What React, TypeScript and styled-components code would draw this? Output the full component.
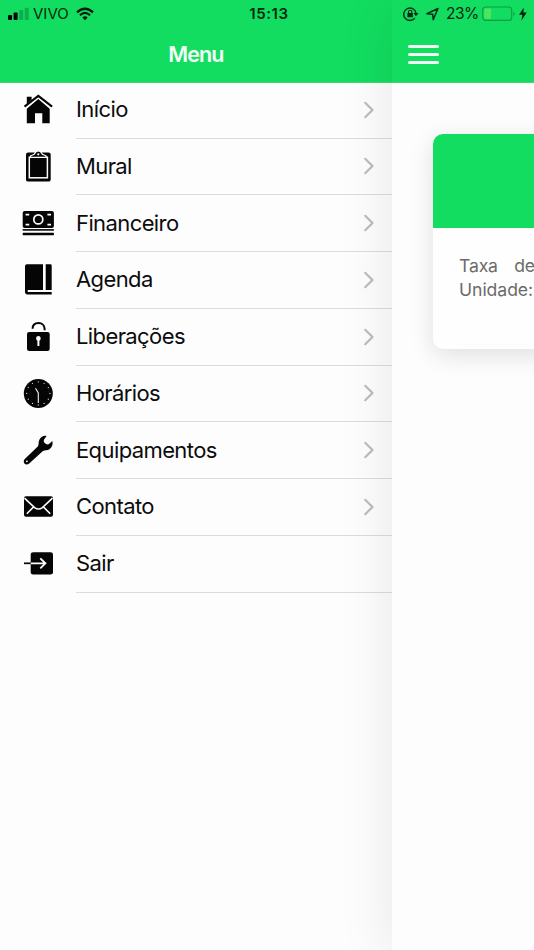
import React from "react";
import styled, { createGlobalStyle } from "styled-components";

const GREEN = "#12dd60";

const GlobalStyle = createGlobalStyle`
  * { box-sizing: border-box; }
  html, body { margin: 0; padding: 0; background: #fdfdfd; }
  body { font-family: Inter, "Liberation Sans", sans-serif; overflow: hidden; }
`;

const Screen = styled.div`
  position: relative;
  display: grid;
  grid-template-columns: 392px 142px;
  width: 534px;
  height: 950px;
  overflow: hidden;
  background: #fdfdfd;
`;

const StatusBar = styled.div`
  position: absolute;
  z-index: 3;
  inset: 0 0 auto 0;
  height: 27px;
  display: grid;
  grid-template-columns: 248px 42px 1fr;
  align-items: center;
  color: #06290f;
`;

const StatusGroup = styled.div<{ $left: number }>`
  display: flex;
  align-items: center;
  padding-left: ${(p) => p.$left}px;
  svg { display: block; flex: none; }
`;

const StatusText = styled.span<{ $width: number; $size: number; $spacing?: number }>`
  width: ${(p) => p.$width}px;
  font-size: ${(p) => p.$size}px;
  line-height: 20px;
  letter-spacing: ${(p) => p.$spacing ?? 0}px;
  white-space: nowrap;
`;

const Clock = styled.span`
  font-size: 15px;
  font-weight: 600;
  line-height: 20px;
  text-align: center;
  letter-spacing: 0.6px;
  white-space: nowrap;
`;

const MenuPane = styled.nav`
  min-width: 0;
  display: flex;
  flex-direction: column;
`;

const Header = styled.header<{ $align?: string }>`
  flex: none;
  height: 83px;
  padding-top: 27px;
  display: flex;
  align-items: center;
  justify-content: ${(p) => p.$align ?? "center"};
  background: ${GREEN};
  border-bottom: 1px solid #3fd678;
`;

const Title = styled.h1`
  margin: -1px 0 0;
  font-size: 21.5px;
  font-weight: 600;
  line-height: 28px;
  letter-spacing: -0.9px;
  color: #f4fff8;
`;

const List = styled.ul`
  list-style: none;
  margin: -1.2px 0 0;
  padding: 0;
`;

const Row = styled.li`
  display: grid;
  grid-template-columns: 54px 1fr;
  column-gap: 22px;
  height: 56.75px;
`;

const IconSlot = styled.span`
  display: flex;
  align-items: center;
  justify-content: flex-end;
  svg { display: block; }
`;

const RowBody = styled.span`
  display: flex;
  align-items: center;
  justify-content: space-between;
  padding-right: 17px;
  border-bottom: 1px solid #dcdcdc;
`;

const Label = styled.span`
  margin-top: -1px;
  font-size: 22px;
  line-height: 30px;
  letter-spacing: -0.6px;
  color: #0c0c0c;
`;

const ContentPane = styled.main`
  position: relative;
  z-index: 1;
  display: flex;
  flex-direction: column;
  background: #fdfdfd;
  box-shadow: 0 8px 56px rgba(0, 0, 0, 0.095);
`;

const MenuButton = styled.button`
  margin: 0 0 0 16px;
  padding: 0;
  border: 0;
  background: none;
  width: 31px;
  height: 19px;
  display: flex;
  flex-direction: column;
  justify-content: space-between;
`;

const Bar = styled.span`
  height: 3px;
  width: 31px;
  border-radius: 2px;
  background: #effff4;
`;

const Viewport = styled.div`
  flex: 1;
  overflow: hidden;
  padding: 51px 0 0 41px;
`;

const Card = styled.section`
  width: 330px;
  height: 215px;
  border-radius: 10px;
  overflow: hidden;
  background: #fefefe;
  box-shadow: 0 6px 24px rgba(0, 0, 0, 0.12);
`;

const CardBanner = styled.div`
  height: 94px;
  background: ${GREEN};
`;

const CardText = styled.p`
  margin: 0;
  padding: 25.5px 0 0 26px;
  font-size: 17.6px;
  line-height: 24.5px;
  color: #6b6b6b;
  white-space: nowrap;
`;

const TextLine = styled.span<{ $gap?: number; $spacing: number }>`
  display: block;
  word-spacing: ${(p) => p.$gap ?? 0}px;
  letter-spacing: ${(p) => p.$spacing}px;
`;

const Icon = ({ children }: { children: React.ReactNode }) => (
  <svg width="32" height="32" viewBox="0 0 32 32" fill="#050505">
    {children}
  </svg>
);

const HomeIcon = () => (
  <Icon>
    <path d="M16.3 4.9 27.7 14.8V29.3H20.3V19.2H13V29.3H4.8V14.8Z" />
    <path d="M2.4 13.3 16.3 2 30.2 13.3" fill="none" stroke="#fdfdfd" strokeWidth="3.8" />
    <path d="M4.8 2.8H9.6V6L4.8 10Z" />
    <path d="M2.5 12.6 16.3 1.9 30.1 12.6" fill="none" stroke="#050505" strokeWidth="2.1" />
  </Icon>
);

const ClipboardIcon = () => (
  <Icon>
    <rect x="4" y="1.4" width="24.7" height="29.2" rx="2.2" />
    <rect x="7.3" y="6.2" width="18.1" height="20.6" fill="none" stroke="#fdfdfd" strokeWidth="1.5" />
    <path
      d="M8.6 6.4V4.8L12.2 3.2C13 1.6 14.3-.2 16.3-.2S19.6 1.6 20.4 3.2L24 4.8V6.4Z"
      stroke="#fdfdfd"
      strokeWidth="1.2"
    />
    <circle cx="16.3" cy="3.3" r="1.1" fill="#fdfdfd" />
  </Icon>
);

const CashIcon = () => (
  <Icon>
    <rect x="0.7" y="2.9" width="31.2" height="17" rx="2" />
    <circle cx="16.3" cy="11.4" r="4.5" fill="none" stroke="#fdfdfd" strokeWidth="1.7" />
    <path
      d="M3.6 6.6H7.2M25.4 6.6H29M3.6 16.6H7.2M25.4 16.6H29"
      stroke="#fdfdfd"
      strokeWidth="1.7"
      fill="none"
    />
    <rect x="0.7" y="21.1" width="31.2" height="1.6" />
    <rect x="0.7" y="24.7" width="31.2" height="2.5" rx=".4" />
  </Icon>
);

const BookIcon = () => (
  <Icon>
    <path d="M5 .2H21V26.1H6.4C5.3 26.1 5.3 28.1 6.4 28.1H29.7V30.6H5.4C3.9 30.6 3 29.5 3 28.1V2.2Q3 .2 5 .2Z" />
    <path d="M23.7.2H28.4Q29.7.2 29.7 1.5V26.1H23.7Z" />
  </Icon>
);

const UnlockIcon = () => (
  <Icon>
    <rect x="5" y="10.9" width="22.7" height="19" rx="2.2" />
    <path
      d="M10.6 7.8C10.6 4.2 13 2 16.5 2S22.6 4.4 22.6 7.8V9.2"
      fill="none"
      stroke="#050505"
      strokeWidth="2"
    />
    <circle cx="16.4" cy="17.4" r="2.3" fill="#fdfdfd" />
    <path d="M15.4 17.4H17.4V25H15.4Z" fill="#fdfdfd" />
  </Icon>
);

const TICKS = Array.from({ length: 12 }, (_, i) => {
  const a = (i * Math.PI) / 6;
  return { x: 16.3 + 11.6 * Math.sin(a), y: 15.4 - 11.6 * Math.cos(a) };
});

const TimeIcon = () => (
  <Icon>
    <circle cx="16.3" cy="15.4" r="14.5" />
    {TICKS.map((t, i) => (
      <circle key={i} cx={t.x} cy={t.y} r=".65" fill="#d8d8d8" />
    ))}
    <path d="M13.5 10.2 16.3 15V25" fill="none" stroke="#f5f5f5" strokeWidth="1.1" />
  </Icon>
);

const WrenchIcon = () => (
  <Icon>
    <path d="M24.6 1 22.1 4.4Q21.2 6 22.2 7.4L24 9Q25.5 9.9 27 9L30.3 6.1C31.3 9.2 30.1 12.5 27.5 14.3C25.3 15.7 22.9 15 20.9 16.1L7.2 28.5C5.6 30 3.5 29.8 2.4 28.4C1.4 27.1 1.6 25.3 2.8 24.1L16 11.3C17 9.3 16.2 7 17.4 4.7C18.8 2 21.8.3 24.6 1Z" />
    <circle cx="4.9" cy="26.3" r=".9" fill="#fdfdfd" />
  </Icon>
);

const MailIcon = () => (
  <Icon>
    <rect x="2" y="5.3" width="29" height="20.4" rx="2" />
    <path
      d="M2.5 7.2 12.6 16.6Q16.5 19.5 20.4 16.6L30.5 7.2M4.8 22.8 11.7 15.8M28.2 22.8 21.3 15.8"
      fill="none"
      stroke="#fdfdfd"
      strokeWidth="1.6"
    />
  </Icon>
);

const ExitIcon = () => (
  <Icon>
    <rect x="8.7" y="4.2" width="22.3" height="22.4" rx="2.4" />
    <path d="M2 15.3H9" stroke="#050505" strokeWidth="1.7" />
    <path d="M8.7 15.3H22.6M18.3 10.3 23.4 15.3 18.3 20.3" fill="none" stroke="#fdfdfd" strokeWidth="1.8" />
  </Icon>
);

const Chevron = () => (
  <svg width="12" height="18" viewBox="0 0 12 18" fill="none">
    <path
      d="M2.2 1.8 9.5 9 2.2 16.2"
      stroke="#bcbcbc"
      strokeWidth="2.2"
      strokeLinecap="round"
      strokeLinejoin="round"
    />
  </svg>
);

const Signal = () => (
  <svg width="25" height="14" viewBox="0 0 25 14">
    <rect x="0" y="8" width="4" height="5" rx="1" />
    <rect x="5.6" y="5.6" width="4" height="7.4" rx="1" />
    <rect x="11.2" y="3" width="4" height="10" rx="1" fill="#0fae4c" />
    <rect x="16.7" y="0.8" width="4" height="12.2" rx="1" fill="#0fae4c" />
  </svg>
);

const Wifi = () => (
  <svg width="18" height="14" viewBox="0 0 18 14" fill="none" stroke="#041a09">
    <path d="M1 5.3Q9-1.9 17 5.3" strokeWidth="2.3" />
    <path d="M3.9 8.2Q9 3.7 14.1 8.2" strokeWidth="2.1" />
    <path d="M9 13.2 6.3 10.5Q9 8.2 11.7 10.5Z" fill="#041a09" stroke="none" />
  </svg>
);

const RotationLock = () => (
  <svg width="23" height="16" viewBox="0 0 23 16" fill="none" stroke="#073114">
    <path d="M11.8 12.1A6.2 6.2 0 1 1 13 7" strokeWidth="1.4" />
    <path d="M10.4 7H15.6L13 10.2Z" fill="#073114" stroke="none" />
    <rect x="4.4" y="7" width="5.6" height="4.2" rx=".5" fill="#073114" stroke="none" />
    <path d="M5.6 7.2V5.8Q5.6 4.3 7.2 4.3T8.8 5.8V7.2" strokeWidth="1.1" />
  </svg>
);

const LocationArrow = () => (
  <svg width="20" height="14" viewBox="0 0 20 14" fill="none" stroke="#073114">
    <path d="M.9 6.8 12 1.5 7.2 12.6 6.7 7.2Z" strokeWidth="1.5" strokeLinejoin="round" />
  </svg>
);

const Battery = () => (
  <svg width="37" height="16" viewBox="0 0 37 16">
    <rect x=".7" y="1" width="29" height="13.4" rx="3" fill="none" stroke="#0b9f45" strokeWidth="1.1" />
    <path d="M3.5 2.5H9V12.8H3.5Q2.3 12.8 2.3 11.4V3.9Q2.3 2.5 3.5 2.5Z" fill="#4ee45b" />
    <path d="M31.3 5.4Q34.2 7.7 31.3 10Z" fill="#0b9f45" />
  </svg>
);

const Bolt = () => (
  <svg width="8" height="14" viewBox="0 0 8 14">
    <path d="M4.8.6.1 7.8H3.4L2.5 13.4 7.7 5.5H4.4Z" fill="#042009" />
  </svg>
);

const items = [
  { label: "Início", icon: HomeIcon },
  { label: "Mural", icon: ClipboardIcon },
  { label: "Financeiro", icon: CashIcon },
  { label: "Agenda", icon: BookIcon },
  { label: "Liberações", icon: UnlockIcon },
  { label: "Horários", icon: TimeIcon },
  { label: "Equipamentos", icon: WrenchIcon },
  { label: "Contato", icon: MailIcon },
  { label: "Sair", icon: ExitIcon, last: true },
];

export default function App() {
  return (
    <>
      <GlobalStyle />
      <Screen>
        <StatusBar>
          <StatusGroup $left={8}>
            <Signal />
            <StatusText $width={43} $size={15}>VIVO</StatusText>
            <Wifi />
          </StatusGroup>
          <Clock>15:13</Clock>
          <StatusGroup $left={113}>
            <RotationLock />
            <LocationArrow />
            <StatusText $width={36} $size={15.5} $spacing={-0.5}>23%</StatusText>
            <Battery />
            <Bolt />
          </StatusGroup>
        </StatusBar>
        <MenuPane>
          <Header>
            <Title>Menu</Title>
          </Header>
          <List>
            {items.map(({ label, icon: ItemIcon, last }) => (
              <Row key={label}>
                <IconSlot>
                  <ItemIcon />
                </IconSlot>
                <RowBody>
                  <Label>{label}</Label>
                  {!last && <Chevron />}
                </RowBody>
              </Row>
            ))}
          </List>
        </MenuPane>
        <ContentPane>
          <Header $align="flex-start">
            <MenuButton aria-label="Menu">
              <Bar />
              <Bar />
              <Bar />
            </MenuButton>
          </Header>
          <Viewport>
            <Card>
              <CardBanner />
              <CardText>
                <TextLine $gap={11.5} $spacing={-0.15}>Taxa de</TextLine>
                <TextLine $spacing={-0.05}>Unidade:</TextLine>
              </CardText>
            </Card>
          </Viewport>
        </ContentPane>
      </Screen>
    </>
  );
}
